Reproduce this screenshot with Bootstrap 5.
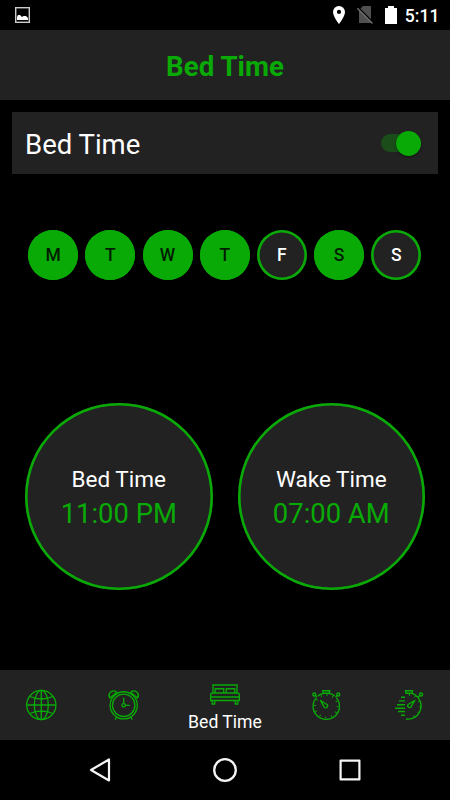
<!DOCTYPE html>
<html lang="en">
<head>
<meta charset="utf-8">
<meta name="viewport" content="width=device-width, initial-scale=1">
<title>Bed Time</title>
<link href="https://cdn.jsdelivr.net/npm/bootstrap@5.3.0/dist/css/bootstrap.min.css" rel="stylesheet">
<style>
:root { --green: #09aa06; --panel: #222; }
body { font-family: Roboto, sans-serif; background: #000; color: #fff; line-height: 1; height: 800px; overflow: hidden; }
svg { display: block; flex: none; }
.panel { background: var(--panel); }
.green { color: var(--green); }
.status { height: 30px; padding: 0 10.5px 0 15px; }
.clock { font-size: 17.6px; font-weight: 500; margin-left: 8px; padding-top: 3px; }
.title-bar { height: 70px; }
.title-bar h1 { font-size: 27.7px; font-weight: 700; padding-top: 3px; }
.switch-row { height: 62px; margin: 12px 12px 0; padding: 0 17px 0 13px; font-size: 27.5px; }
.switch-row label { padding-top: 3px; }
.form-check-input.toggle { width: 27px; height: 18px; border: 0; background: #1b4d1a; margin: 0 13px 0 0; position: relative; box-shadow: none; }
.form-check-input.toggle::after { content: ""; position: absolute; width: 25px; height: 25px; left: 15px; top: -3.5px; border-radius: 50%; background: var(--green); box-shadow: 0 1px 2px #0008; }
.days { margin-top: 55.500px; gap: 7.2px; padding-left: 28.2px; }
.day { width: 50px; height: 50px; border: 0; box-shadow: inset 0 0 0 2.600px var(--green); background: var(--panel); color: #fff; font-size: 17.5px; font-weight: 500; line-height: 1; flex: none; padding: 3px 0 0; }
.day.on { background: var(--green); color: #001d00; }
.dials { margin-top: 123px; padding: 0 25px; }
.dial { width: 187.5px; height: 187.5px; box-shadow: inset 0 0 0 2.600px var(--green); }
.dial .name { font-size: 22.5px; margin-top: 3px; }
.dial .hour { font-size: 27.4px; margin-top: 10.5px; }
.tabs { height: 70px; padding-left: 15px; display: grid; grid-template-columns: 80px 89px 116px 85px 60px; }
.tab-now { width: 82px; font-size: 17.6px; padding-top: 5px; }
.tab-now span { margin-top: 8px; }
.system { height: 60px; padding: 0 85px; }
.line { fill: none; stroke: var(--green); stroke-width: 1.35; }
</style>
<script src="https://cdn.jsdelivr.net/npm/bootstrap@5.3.0/dist/js/bootstrap.bundle.min.js"></script>
</head>
<body class="d-flex flex-column">
<div class="status d-flex align-items-center">
  <svg width="15" height="16" viewBox="0 0 15 16"><rect x=".7" y=".7" width="13.6" height="14.6" fill="none" stroke="#ccc" stroke-width="1.4"/><path d="M2 13V10l1-2h2l2 2 1.500-1H11l2 2v2z" fill="#fff"/></svg>
  <svg class="ms-auto" width="64" height="20" viewBox="0 0 64 20">
    <path d="M5.900 1A6 6 0 0 0 0 7c0 4.500 6 12 6 12s6-7.500 6-12A6 6 0 0 0 5.900 1zm.1 3.800a2.100 2.100 0 1 1 0 4.200 2.100 2.100 0 0 1 0-4.200z" fill="#fff"/>
    <path d="M26 5l4-4h8v17H26z" fill="#505050"/><path d="M25.300 2.500l15.500 15.500" stroke="#000" stroke-width="1.500"/><path d="M24.300 3.300L39.500 18.500" stroke="#707070" stroke-width="1.300"/>
    <path d="M52 3h3V1h6v2h3v16H52z" fill="#fff"/>
  </svg>
  <span class="clock">5:11</span>
</div>
<header class="title-bar panel d-flex align-items-center justify-content-center"><h1 class="green m-0">Bed Time</h1></header>
<div class="switch-row panel d-flex align-items-center justify-content-between flex-shrink-0">
  <label for="bed">Bed Time</label>
  <span class="d-flex"><input id="bed" class="form-check-input toggle rounded-pill" type="checkbox" role="switch"></span>
</div>
<div class="days d-flex">
  <button class="day on rounded-circle">M</button><button class="day on rounded-circle">T</button><button class="day on rounded-circle">W</button><button class="day on rounded-circle">T</button><button class="day rounded-circle">F</button><button class="day on rounded-circle">S</button><button class="day rounded-circle">S</button>
</div>
<div class="dials d-flex justify-content-between">
  <div class="dial panel rounded-circle d-flex flex-column align-items-center justify-content-center"><span class="name">Bed Time</span><span class="hour green">11:00 PM</span></div>
  <div class="dial panel rounded-circle d-flex flex-column align-items-center justify-content-center"><span class="name">Wake Time</span><span class="hour green">07:00 AM</span></div>
</div>
<nav class="tabs panel align-items-center mt-auto flex-shrink-0">
  <svg width="60" height="50" viewBox="0 0 60 50" class="line">
    <g transform="translate(26.300 25)"><circle r="14.600"/><ellipse rx="7" ry="14.600"/><path d="M0-14.600v29.200M-14.600 0h29.200M-11.500-8.500Q0-3.500 11.500-8.500M-11.500 8.500Q0 3.500 11.500 8.500"/></g>
  </svg>
  <svg width="60" height="50" viewBox="0 0 60 50" class="line">
    <g transform="translate(28.700 25.300)"><circle r="13.600"/><circle r="11.200"/><circle r="1.700"/><path d="M0-1.700V-7.500M1.700 0H6M-7 11.500l-1.500 3M7 11.500l1.500 3M-13.700-7.200C-16.500-10.500-13-15.500-8.500-14.200q1 .5 1.300 1.500zM13.700-7.200C16.500-10.500 13-15.500 8.500-14.200q-1 .5-1.300 1.500z"/></g>
  </svg>
  <div class="tab-now d-flex flex-column align-items-center">
    <svg width="32" height="22" viewBox="0 0 32 22" class="line"><path d="M4 9V1h24v8M1.700 14.500V11q0-2 2-2h24.600q2 0 2 2v5.500H1.700zM1.700 13h28.600M3.200 16.500V20h2.500v-3.500M26.300 16.500V20h2.500v-3.500M6.200 9V4.700h8.500V9M17.300 9V4.700h8.500V9"/></svg>
    <span class="text-nowrap">Bed Time</span>
  </div>
  <svg width="60" height="50" viewBox="0 0 60 50" class="line">
    <g transform="translate(26.300 26.200)"><path d="M-3-12.800A13.200 13.200 0 0 0-8.500-10.200M-10-8.600A13.200 13.200 0 1 0 10-8.600M8.500-10.200A13.200 13.200 0 0 0 3-12.800M-3-13h6l.5-2.500h-7zM-9.300-9.300l-1.500-1.500M9.300-9.300l1.500-1.500"/><circle cx="-12" cy="-11.700" r="1.500"/><circle cx="12" cy="-11.700" r="1.500"/><path d="M-6-6l4 7q2 1.500 3-.5t-1-2.500z"/><circle r="11.200" stroke-width="1.800" stroke-dasharray="1 4.864"/></g>
  </svg>
  <svg width="60" height="50" viewBox="0 0 60 50" class="line">
    <g transform="translate(24 26.200)"><path d="M3-12.800A13.200 13.200 0 0 1-3 12.800M-3-13h6l.5-2.500h-7zM9.300-9.300l1.500-1.500M6-6l-6.500 4q-2 2 0 3t2.500-.5zM-8-9h4M-10-5.300h6M-12-1.500h8M-14 2h10M-11 5.300h7M-8 9h4"/><circle cx="12" cy="-11.700" r="1.500"/><path d="M0-11.200A11.200 11.200 0 0 1 0 11.200" stroke-width="1.800" stroke-dasharray="1 4.864"/></g>
  </svg>
</nav>
<div class="system d-flex align-items-center justify-content-between flex-shrink-0">
  <svg width="30" height="30" viewBox="0 0 30 30" fill="none" stroke="#f4f4f4" stroke-width="2.200" stroke-linejoin="round"><path d="M24 4.500v21L6 15z"/></svg>
  <svg width="30" height="30" viewBox="0 0 30 30" fill="none" stroke="#f4f4f4" stroke-width="2.300"><circle cx="15" cy="15" r="10.800"/></svg>
  <svg width="30" height="30" viewBox="0 0 30 30" fill="none" stroke="#f4f4f4" stroke-width="2.200" stroke-linejoin="round"><rect x="5.600" y="5.600" width="18.800" height="18.800"/></svg>
</div>
</body>
</html>
